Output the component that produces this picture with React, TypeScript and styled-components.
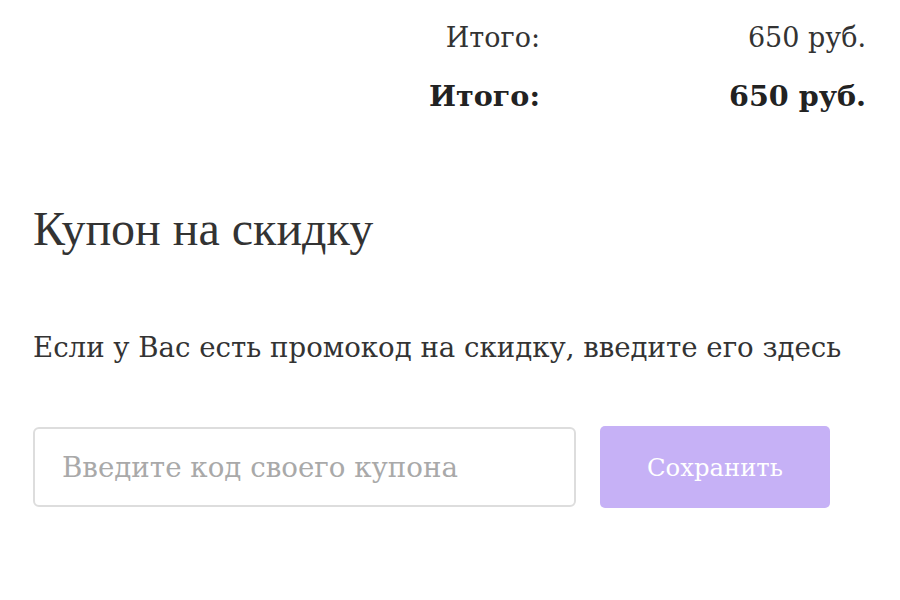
import React from "react";
import styled, { createGlobalStyle } from "styled-components";

const Global = createGlobalStyle`
  html, body { margin: 0; padding: 0; background: #ffffff; }
  body { font-family: "DejaVu Serif", "Liberation Serif", serif; color: #333333; }
`;

const Page = styled.div`
  width: 900px;
  height: 600px;
  box-sizing: border-box;
  padding: 20px 34px 0 33px;
  display: flex;
  flex-direction: column;
  overflow: hidden;
`;

const Totals = styled.div`
  display: grid;
  grid-template-columns: 1fr 326px;
  justify-items: end;
  row-gap: 22px;
`;

const Cell = styled.div<{ $bold?: boolean }>`
  font-size: ${(p) => (p.$bold ? "28.6px" : "27px")};
  line-height: 36px;
  font-weight: ${(p) => (p.$bold ? 700 : 400)};
  color: ${(p) => (p.$bold ? "#222" : "#333")};
`;

const Heading = styled.h2`
  margin: 87px 0 0;
  font-family: "Liberation Serif", serif;
  font-size: 48px;
  line-height: 56px;
  font-weight: 400;
  color: #333;
`;

const Text = styled.p`
  margin: 73px 0 0;
  font-size: 27.6px;
  line-height: 36px;
  color: #333;
`;

const Form = styled.div`
  margin-top: 60px;
  display: flex;
  gap: 24px;
  align-items: center;
`;

const Input = styled.input`
  width: 543px;
  height: 80px;
  box-sizing: border-box;
  border: 2px solid #dddddd;
  border-radius: 6px;
  padding: 0 27px;
  font-family: inherit;
  font-size: 27.7px;
  color: #333;
  outline: none;
  &::placeholder { color: #a9a9a9; }
`;

const Button = styled.button`
  width: 230px;
  height: 82px;
  border: none;
  border-radius: 5px;
  background: #c6b1f6;
  color: #ffffff;
  font-family: inherit;
  font-size: 24.3px;
  cursor: pointer;
`;

export default function App() {
  return (
    <>
      <Global />
      <Page>
        <Totals>
          <Cell>Итого:</Cell>
          <Cell>650 руб.</Cell>
          <Cell $bold>Итого:</Cell>
          <Cell $bold>650 руб.</Cell>
        </Totals>
        <Heading>Купон на скидку</Heading>
        <Text>Если у Вас есть промокод на скидку, введите его здесь</Text>
        <Form>
          <Input placeholder="Введите код своего купона" />
          <Button>Сохранить</Button>
        </Form>
      </Page>
    </>
  );
}
